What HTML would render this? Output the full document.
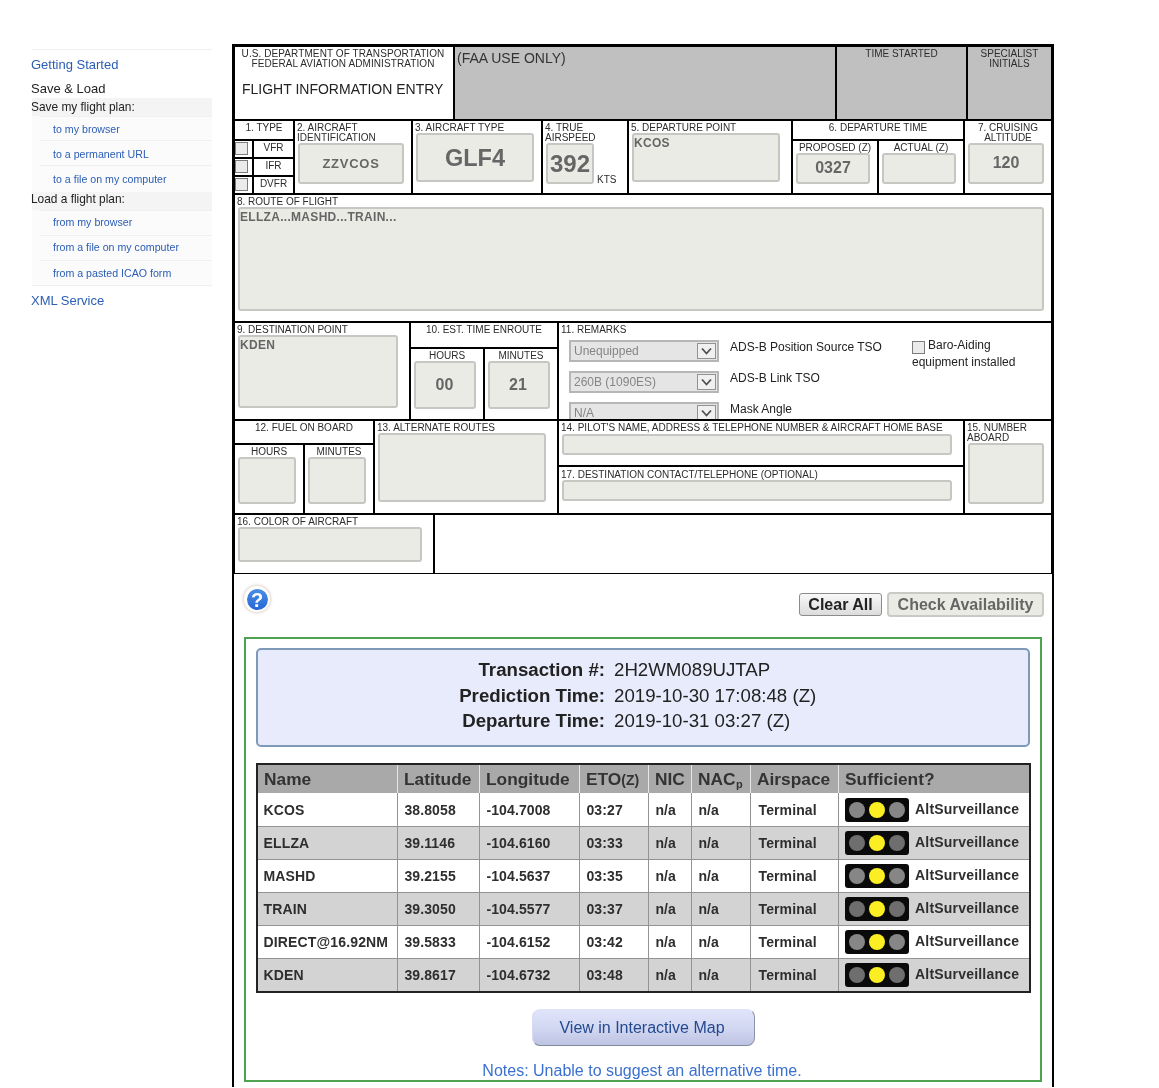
<!DOCTYPE html>
<html lang="en">
<head>
<meta charset="utf-8">
<title>Flight Information Entry</title>
<style>
html,body{margin:0;padding:0;background:#fff;}
#wrap{position:absolute;left:0;top:0;width:1159px;height:1088px;will-change:transform;}
body{width:1159px;height:1088px;position:relative;overflow:hidden;font-family:"Liberation Sans",Arial,sans-serif;color:#222;}
.abs,.l,.t,.ib,.lb,.sb a,.sb div{position:absolute;}
.l{background:#000;}
.lb{font-size:10px;line-height:10px;color:#2c2c2c;white-space:nowrap;}
.c{text-align:center;}
.lb:not(.c){margin-left:-1px;}
.ib{box-sizing:border-box;background:#ebebe6;border:2px solid #c6c6c2;border-radius:3px;color:#666;font-weight:bold;text-align:center;white-space:nowrap;}
.ta{text-align:left;font-size:12px;letter-spacing:.3px;line-height:14px;padding:1px 0 0 0;}
.gray{background:#c0c0c0;}
.cb{position:absolute;box-sizing:border-box;width:13px;height:13px;border:1px solid #7c7c7c;background:#ebebeb;}
.sel{position:absolute;box-sizing:border-box;width:150px;height:22px;border:2px solid #b6b6b6;background:#e5e5e5;color:#858585;font-size:12px;line-height:18px;padding-left:3px;}
.sel i{position:absolute;right:1px;top:1px;box-sizing:border-box;width:19px;height:16px;border:1px solid #929292;background:#f0f0f0;}
.sel i svg{position:absolute;left:3px;top:3px;}
.r12{position:absolute;font-size:12px;line-height:14px;color:#222;white-space:nowrap;}

.s1{font-size:13px;margin-left:-1px;line-height:16px;white-space:nowrap;}
.s2{font-size:11.9px;margin-left:-1px;line-height:14px;white-space:nowrap;color:#222;}
.s3{font-size:10.65px;line-height:14px;white-space:nowrap;color:#2b5db5;}
.help{position:absolute;left:244px;top:586px;width:26px;height:26px;border-radius:50%;background:#fff;box-shadow:0 0 3px 1px #ddd3c8;}
.help b{position:absolute;left:2.5px;top:2.5px;width:21px;height:21px;border-radius:50%;background:linear-gradient(#4a8fe4,#2566d6);color:#fff;font-size:20px;line-height:22px;text-align:center;font-weight:bold;}
.btn1{position:absolute;box-sizing:border-box;left:799px;top:593px;width:83px;height:23px;border:1px solid #8c8c8c;border-radius:3px;background:linear-gradient(#f8f8f8,#dcdcdc);font-size:16px;font-weight:bold;line-height:21px;text-align:center;color:#222;}
.btn2{position:absolute;box-sizing:border-box;left:887px;top:592px;width:157px;height:25px;border:2px solid #c9c9c5;border-radius:4px;background:#ebebe6;font-size:16px;font-weight:bold;line-height:21px;text-align:center;color:#666;}
.green{position:absolute;box-sizing:border-box;left:244px;top:637px;width:798px;height:445px;border:2px solid #4fa24f;}
.blue{position:absolute;box-sizing:border-box;left:256px;top:648px;width:774px;height:99px;border:2px solid #7f99b8;border-radius:5px;background:#e8ebfb;}
.blue div{position:absolute;font-size:18.67px;line-height:22px;white-space:nowrap;color:#222;}
.blue .k{right:423px;font-weight:bold;text-align:right;}
.blue .v{left:356px;}
.tbl{position:absolute;left:256px;top:763px;width:775px;height:230px;background:#222;}
.tbl div{position:absolute;}
.th{top:2px;height:28px;background:#a9a9a9;}
.th span{position:absolute;left:6px;top:3px;font-size:17.33px;line-height:22px;font-weight:bold;color:#333;white-space:nowrap;}
.td{height:33px;}
.sep{left:2px;width:771px;height:1px;background:#939393;}
.th sub{font-size:11px;vertical-align:baseline;position:relative;top:3px;left:.5px;}
.th small{font-size:14px;}
.thbg{left:2px;top:2px;width:771px;height:28px;background:#e6e6e6;}
.tbbg{left:2px;top:30px;width:771px;height:198px;background:#939393;}
.td .nm{left:5.5px;letter-spacing:.15px;}
.td .as{left:76px;top:8.4px;font-size:14px;letter-spacing:.2px;}
.td span{position:absolute;left:6.4px;top:9px;font-size:14px;letter-spacing:.12px;line-height:16px;font-weight:bold;color:#2e2e2e;white-space:nowrap;}
.tl{position:absolute;left:6px;top:5px;width:64px;height:24px;border-radius:3px;background:#0a0a0a;}
.tl i{position:absolute;top:4px;width:16px;height:16px;border-radius:50%;}
.vbtn{position:absolute;box-sizing:border-box;left:532px;top:1009px;width:223px;height:37px;border-radius:8px;border:1px solid;border-color:#dfe3f8 #8d92a8 #7f8a9c #d8dcf3;background:linear-gradient(#e0e4fa,#d3d8f2 50%,#bdc3e2);color:#23498f;font-size:16px;line-height:35px;text-align:center;text-indent:-3px;}
.notes{position:absolute;left:243px;top:1062px;width:798px;text-align:center;font-size:16px;line-height:18px;color:#3a70d0;}
</style>
</head>
<body><div id="wrap">

<!-- SIDEBAR -->
<div class="sb" id="sb">
<div style="left:32px;top:49px;width:180px;height:1px;background:#f0f0f0"></div>
<a class="s1" style="left:32px;top:57px;color:#2b5db5">Getting Started</a>
<div class="s1" style="left:32px;top:81px;color:#222">Save &amp; Load</div>
<div style="left:32px;top:98px;width:180px;height:18px;background:#f4f4f4"></div>
<div class="s2" style="left:32px;top:100px">Save my flight plan:</div>
<div style="left:32px;top:116px;width:180px;height:76px;background:#fbfbfb"></div>
<div style="left:40px;top:116px;width:172px;height:1px;background:#f0f0f0"></div>
<div style="left:40px;top:140px;width:172px;height:1px;background:#f0f0f0"></div>
<div style="left:40px;top:165px;width:172px;height:1px;background:#f0f0f0"></div>
<a class="s3" style="left:53px;top:122px">to my browser</a>
<a class="s3" style="left:53px;top:147px">to a permanent URL</a>
<a class="s3" style="left:53px;top:172px">to a file on my computer</a>
<div style="left:32px;top:192px;width:180px;height:18px;background:#f4f4f4"></div>
<div class="s2" style="left:32px;top:192px">Load a flight plan:</div>
<div style="left:32px;top:210px;width:180px;height:75px;background:#fbfbfb"></div>
<div style="left:40px;top:210px;width:172px;height:1px;background:#f0f0f0"></div>
<div style="left:40px;top:235px;width:172px;height:1px;background:#f0f0f0"></div>
<div style="left:40px;top:260px;width:172px;height:1px;background:#f0f0f0"></div>
<div style="left:32px;top:285px;width:180px;height:1px;background:#f0f0f0"></div>
<a class="s3" style="left:53px;top:215px">from my browser</a>
<a class="s3" style="left:53px;top:240px">from a file on my computer</a>
<a class="s3" style="left:53px;top:266px">from a pasted ICAO form</a>
<a class="s1" style="left:32px;top:293px;color:#2b5db5">XML Service</a>
</div>

<!-- FORM GRID LINES -->
<div id="grid">
<div class="l" style="left:232px;top:44px;width:2px;height:1043px"></div>
<div class="l" style="left:1052px;top:44px;width:2px;height:1043px"></div>
<div class="l" style="left:232px;top:44px;width:822px;height:3px"></div>
<div class="l" style="left:234px;top:46px;width:1px;height:528px"></div>
<div class="l" style="left:1051px;top:46px;width:1px;height:528px"></div>
<div class="l" style="left:235px;top:119px;width:816px;height:2px"></div>
<div class="l" style="left:235px;top:193px;width:816px;height:2px"></div>
<div class="l" style="left:235px;top:321px;width:816px;height:2px"></div>
<div class="l" style="left:235px;top:419px;width:816px;height:2px"></div>
<div class="l" style="left:235px;top:513px;width:816px;height:2px"></div>
<div class="l" style="left:235px;top:573px;width:816px;height:1px"></div>
<!-- row1 -->
<div class="gray abs" style="left:455px;top:47px;width:596px;height:72px"></div>
<div class="l" style="left:453px;top:47px;width:2px;height:72px"></div>
<div class="l" style="left:835px;top:47px;width:2px;height:72px"></div>
<div class="l" style="left:966px;top:47px;width:2px;height:72px"></div>
<!-- row2 -->
<div class="l" style="left:293px;top:121px;width:2px;height:72px"></div>
<div class="l" style="left:411px;top:121px;width:2px;height:72px"></div>
<div class="l" style="left:541px;top:121px;width:2px;height:72px"></div>
<div class="l" style="left:627px;top:121px;width:2px;height:72px"></div>
<div class="l" style="left:791px;top:121px;width:2px;height:72px"></div>
<div class="l" style="left:963px;top:121px;width:2px;height:72px"></div>
<div class="l" style="left:235px;top:139px;width:58px;height:2px"></div>
<div class="l" style="left:235px;top:157px;width:58px;height:2px"></div>
<div class="l" style="left:235px;top:175px;width:58px;height:2px"></div>
<div class="l" style="left:252px;top:141px;width:2px;height:52px"></div>
<div class="l" style="left:793px;top:139px;width:170px;height:2px"></div>
<div class="l" style="left:877px;top:141px;width:2px;height:52px"></div>
<!-- row4 -->
<div class="l" style="left:409px;top:323px;width:2px;height:96px"></div>
<div class="l" style="left:557px;top:323px;width:2px;height:96px"></div>
<div class="l" style="left:411px;top:347px;width:146px;height:2px"></div>
<div class="l" style="left:483px;top:349px;width:2px;height:70px"></div>
<!-- row5 -->
<div class="l" style="left:373px;top:421px;width:2px;height:92px"></div>
<div class="l" style="left:557px;top:421px;width:2px;height:92px"></div>
<div class="l" style="left:963px;top:421px;width:2px;height:92px"></div>
<div class="l" style="left:235px;top:443px;width:138px;height:2px"></div>
<div class="l" style="left:303px;top:445px;width:2px;height:68px"></div>
<div class="l" style="left:559px;top:465px;width:404px;height:2px"></div>
<!-- row6 -->
<div class="l" style="left:433px;top:515px;width:2px;height:58px"></div>
</div>

<!-- ROW 1 -->
<div class="lb c" style="left:234px;top:49px;width:218px;letter-spacing:.09px">U.S. DEPARTMENT OF TRANSPORTATION<br>FEDERAL AVIATION ADMINISTRATION</div>
<div class="abs" style="left:242px;top:81px;font-size:14px;line-height:16px;white-space:nowrap;color:#222">FLIGHT INFORMATION ENTRY</div>
<div class="abs" style="left:457px;top:50px;font-size:14px;line-height:16px;white-space:nowrap;color:#333">(FAA USE ONLY)</div>
<div class="lb c" style="left:837px;top:49px;width:129px">TIME STARTED</div>
<div class="lb c" style="left:968px;top:49px;width:83px">SPECIALIST<br>INITIALS</div>

<!-- ROW 2 -->
<div class="lb c" style="left:235px;top:123px;width:58px">1. TYPE</div>
<div class="cb" style="left:235px;top:142px"></div>
<div class="cb" style="left:235px;top:160px"></div>
<div class="cb" style="left:235px;top:178px"></div>
<div class="lb c" style="left:254px;top:143px;width:39px">VFR</div>
<div class="lb c" style="left:254px;top:161px;width:39px">IFR</div>
<div class="lb c" style="left:254px;top:179px;width:39px">DVFR</div>

<div class="lb" style="left:298px;top:123px">2. AIRCRAFT<br>IDENTIFICATION</div>
<div class="ib" style="left:298px;top:143px;width:106px;height:41px;font-size:13px;letter-spacing:.75px;line-height:38px">ZZVCOS</div>

<div class="lb" style="left:416px;top:123px">3. AIRCRAFT TYPE</div>
<div class="ib" style="left:416px;top:133px;width:118px;height:49px;font-size:23.5px;line-height:46px">GLF4</div>

<div class="lb" style="left:546px;top:123px">4. TRUE<br>AIRSPEED</div>
<div class="ib" style="left:546px;top:143px;width:48px;height:41px;font-size:24px;line-height:38px">392</div>
<div class="lb" style="left:598px;top:175px">KTS</div>

<div class="lb" style="left:632px;top:123px">5. DEPARTURE POINT</div>
<div class="ib ta" style="left:632px;top:133px;width:148px;height:49px">KCOS</div>

<div class="lb c" style="left:793px;top:123px;width:170px">6. DEPARTURE TIME</div>
<div class="lb c" style="left:793px;top:143px;width:84px">PROPOSED (Z)</div>
<div class="lb c" style="left:879px;top:143px;width:84px">ACTUAL (Z)</div>
<div class="ib" style="left:796px;top:153px;width:74px;height:31px;font-size:16px;line-height:25px">0327</div>
<div class="ib" style="left:882px;top:153px;width:74px;height:31px"></div>

<div class="lb c" style="left:965px;top:123px;width:86px">7. CRUISING<br>ALTITUDE</div>
<div class="ib" style="left:968px;top:143px;width:76px;height:41px;font-size:16px;line-height:36px">120</div>

<!-- ROW 3 -->
<div class="lb" style="left:238px;top:197px">8. ROUTE OF FLIGHT</div>
<div class="ib ta" style="left:238px;top:207px;width:806px;height:104px">ELLZA...MASHD...TRAIN...</div>

<!-- ROW 4 -->
<div class="lb" style="left:238px;top:325px">9. DESTINATION POINT</div>
<div class="ib ta" style="left:238px;top:335px;width:160px;height:73px">KDEN</div>

<div class="lb c" style="left:411px;top:325px;width:146px">10. EST. TIME ENROUTE</div>
<div class="lb c" style="left:411px;top:351px;width:72px">HOURS</div>
<div class="lb c" style="left:485px;top:351px;width:72px">MINUTES</div>
<div class="ib" style="left:414px;top:361px;width:62px;height:48px;font-size:16px;line-height:43px;text-indent:-1px">00</div>
<div class="ib" style="left:488px;top:361px;width:62px;height:48px;font-size:16px;line-height:43px;text-indent:-2px">21</div>

<div class="lb" style="left:562px;top:325px">11. REMARKS</div>
<div class="sel" style="left:569px;top:340px">Unequipped<i><svg width="11" height="8" viewBox="0 0 11 8"><path d="M1 1.5 L5.5 6.5 L10 1.5" fill="none" stroke="#505050" stroke-width="1.8"/></svg></i></div>
<div class="sel" style="left:569px;top:371px">260B (1090ES)<i><svg width="11" height="8" viewBox="0 0 11 8"><path d="M1 1.5 L5.5 6.5 L10 1.5" fill="none" stroke="#505050" stroke-width="1.8"/></svg></i></div>
<div class="sel" style="left:569px;top:402px;height:17px;border-bottom:0;overflow:hidden">N/A<i><svg width="11" height="8" viewBox="0 0 11 8"><path d="M1 1.5 L5.5 6.5 L10 1.5" fill="none" stroke="#505050" stroke-width="1.8"/></svg></i></div>
<div class="r12" style="left:730px;top:340px">ADS-B Position Source TSO</div>
<div class="r12" style="left:730px;top:371px">ADS-B Link TSO</div>
<div class="r12" style="left:730px;top:402px">Mask Angle</div>
<div class="cb" style="left:912px;top:341px"></div>
<div class="r12" style="left:928px;top:338px">Baro-Aiding</div>
<div class="r12" style="left:912px;top:355px">equipment installed</div>

<!-- ROW 5 -->
<div class="lb c" style="left:235px;top:423px;width:138px">12. FUEL ON BOARD</div>
<div class="lb c" style="left:235px;top:447px;width:68px">HOURS</div>
<div class="lb c" style="left:305px;top:447px;width:68px">MINUTES</div>
<div class="ib" style="left:238px;top:457px;width:58px;height:47px"></div>
<div class="ib" style="left:308px;top:457px;width:58px;height:47px"></div>

<div class="lb" style="left:378px;top:423px">13. ALTERNATE ROUTES</div>
<div class="ib" style="left:378px;top:433px;width:168px;height:69px"></div>

<div class="lb" style="left:562px;top:423px">14. PILOT'S NAME, ADDRESS &amp; TELEPHONE NUMBER &amp; AIRCRAFT HOME BASE</div>
<div class="ib" style="left:562px;top:434px;width:390px;height:21px"></div>
<div class="lb" style="left:562px;top:470px">17. DESTINATION CONTACT/TELEPHONE (OPTIONAL)</div>
<div class="ib" style="left:562px;top:480px;width:390px;height:21px"></div>

<div class="lb" style="left:968px;top:423px">15. NUMBER<br>ABOARD</div>
<div class="ib" style="left:968px;top:443px;width:76px;height:61px"></div>

<!-- ROW 6 -->
<div class="lb" style="left:238px;top:517px">16. COLOR OF AIRCRAFT</div>
<div class="ib" style="left:238px;top:527px;width:184px;height:35px"></div>

<!-- BELOW FORM -->
<div id="below">
<div class="help"><b>?</b></div>
<div class="btn1">Clear All</div>
<div class="btn2">Check Availability</div>
<div class="green"></div>
<div class="blue">
<div class="k" style="top:9px">Transaction #:</div><div class="v" style="top:9px">2H2WM089UJTAP</div>
<div class="k" style="top:35px">Prediction Time:</div><div class="v" style="top:35px">2019-10-30 17:08:48 (Z)</div>
<div class="k" style="top:60px">Departure Time:</div><div class="v" style="top:60px">2019-10-31 03:27 (Z)</div>
</div>
<div class="tbl">
<div class="thbg"></div>
<div class="tbbg"></div>
<div class="th" style="left:2px;width:139px"><span>Name</span></div>
<div class="th" style="left:142px;width:81px"><span>Latitude</span></div>
<div class="th" style="left:224px;width:99px"><span>Longitude</span></div>
<div class="th" style="left:324px;width:68px"><span>ETO<small>(Z)</small></span></div>
<div class="th" style="left:393px;width:42px"><span>NIC</span></div>
<div class="th" style="left:436px;width:58px"><span>NAC<sub>p</sub></span></div>
<div class="th" style="left:495px;width:87px"><span>Airspace</span></div>
<div class="th" style="left:583px;width:190px"><span>Sufficient?</span></div>
<div class="td" style="left:2px;top:30px;width:139px;height:33px;background:#fff"><span class="nm">KCOS</span></div>
<div class="td" style="left:142px;top:30px;width:81px;height:33px;background:#fff"><span>38.8058</span></div>
<div class="td" style="left:224px;top:30px;width:99px;height:33px;background:#fff"><span>-104.7008</span></div>
<div class="td" style="left:324px;top:30px;width:68px;height:33px;background:#fff"><span>03:27</span></div>
<div class="td" style="left:393px;top:30px;width:42px;height:33px;background:#fff"><span>n/a</span></div>
<div class="td" style="left:436px;top:30px;width:58px;height:33px;background:#fff"><span>n/a</span></div>
<div class="td" style="left:495px;top:30px;width:87px;height:33px;background:#fff"><span style="left:7.5px">Terminal</span></div>
<div class="td" style="left:583px;top:30px;width:190px;height:33px;background:#fff"><div class="tl"><i style="left:4px;background:#868686"></i><i style="left:24px;background:#fbee22"></i><i style="left:44px;background:#868686"></i></div><span class="as">AltSurveillance</span></div>
<div class="td" style="left:2px;top:63px;width:139px;height:33px;background:#d3d3d3"><span class="nm">ELLZA</span></div>
<div class="td" style="left:142px;top:63px;width:81px;height:33px;background:#d3d3d3"><span>39.1146</span></div>
<div class="td" style="left:224px;top:63px;width:99px;height:33px;background:#d3d3d3"><span>-104.6160</span></div>
<div class="td" style="left:324px;top:63px;width:68px;height:33px;background:#d3d3d3"><span>03:33</span></div>
<div class="td" style="left:393px;top:63px;width:42px;height:33px;background:#d3d3d3"><span>n/a</span></div>
<div class="td" style="left:436px;top:63px;width:58px;height:33px;background:#d3d3d3"><span>n/a</span></div>
<div class="td" style="left:495px;top:63px;width:87px;height:33px;background:#d3d3d3"><span style="left:7.5px">Terminal</span></div>
<div class="td" style="left:583px;top:63px;width:190px;height:33px;background:#d3d3d3"><div class="tl"><i style="left:4px;background:#6e6e6e"></i><i style="left:24px;background:#fbee22"></i><i style="left:44px;background:#6e6e6e"></i></div><span class="as">AltSurveillance</span></div>
<div class="td" style="left:2px;top:96px;width:139px;height:33px;background:#fff"><span class="nm">MASHD</span></div>
<div class="td" style="left:142px;top:96px;width:81px;height:33px;background:#fff"><span>39.2155</span></div>
<div class="td" style="left:224px;top:96px;width:99px;height:33px;background:#fff"><span>-104.5637</span></div>
<div class="td" style="left:324px;top:96px;width:68px;height:33px;background:#fff"><span>03:35</span></div>
<div class="td" style="left:393px;top:96px;width:42px;height:33px;background:#fff"><span>n/a</span></div>
<div class="td" style="left:436px;top:96px;width:58px;height:33px;background:#fff"><span>n/a</span></div>
<div class="td" style="left:495px;top:96px;width:87px;height:33px;background:#fff"><span style="left:7.5px">Terminal</span></div>
<div class="td" style="left:583px;top:96px;width:190px;height:33px;background:#fff"><div class="tl"><i style="left:4px;background:#868686"></i><i style="left:24px;background:#fbee22"></i><i style="left:44px;background:#868686"></i></div><span class="as">AltSurveillance</span></div>
<div class="td" style="left:2px;top:129px;width:139px;height:33px;background:#d3d3d3"><span class="nm">TRAIN</span></div>
<div class="td" style="left:142px;top:129px;width:81px;height:33px;background:#d3d3d3"><span>39.3050</span></div>
<div class="td" style="left:224px;top:129px;width:99px;height:33px;background:#d3d3d3"><span>-104.5577</span></div>
<div class="td" style="left:324px;top:129px;width:68px;height:33px;background:#d3d3d3"><span>03:37</span></div>
<div class="td" style="left:393px;top:129px;width:42px;height:33px;background:#d3d3d3"><span>n/a</span></div>
<div class="td" style="left:436px;top:129px;width:58px;height:33px;background:#d3d3d3"><span>n/a</span></div>
<div class="td" style="left:495px;top:129px;width:87px;height:33px;background:#d3d3d3"><span style="left:7.5px">Terminal</span></div>
<div class="td" style="left:583px;top:129px;width:190px;height:33px;background:#d3d3d3"><div class="tl"><i style="left:4px;background:#6e6e6e"></i><i style="left:24px;background:#fbee22"></i><i style="left:44px;background:#6e6e6e"></i></div><span class="as">AltSurveillance</span></div>
<div class="td" style="left:2px;top:162px;width:139px;height:33px;background:#fff"><span class="nm">DIRECT@16.92NM</span></div>
<div class="td" style="left:142px;top:162px;width:81px;height:33px;background:#fff"><span>39.5833</span></div>
<div class="td" style="left:224px;top:162px;width:99px;height:33px;background:#fff"><span>-104.6152</span></div>
<div class="td" style="left:324px;top:162px;width:68px;height:33px;background:#fff"><span>03:42</span></div>
<div class="td" style="left:393px;top:162px;width:42px;height:33px;background:#fff"><span>n/a</span></div>
<div class="td" style="left:436px;top:162px;width:58px;height:33px;background:#fff"><span>n/a</span></div>
<div class="td" style="left:495px;top:162px;width:87px;height:33px;background:#fff"><span style="left:7.5px">Terminal</span></div>
<div class="td" style="left:583px;top:162px;width:190px;height:33px;background:#fff"><div class="tl"><i style="left:4px;background:#868686"></i><i style="left:24px;background:#fbee22"></i><i style="left:44px;background:#868686"></i></div><span class="as">AltSurveillance</span></div>
<div class="td" style="left:2px;top:195px;width:139px;height:33px;background:#d3d3d3"><span class="nm">KDEN</span></div>
<div class="td" style="left:142px;top:195px;width:81px;height:33px;background:#d3d3d3"><span>39.8617</span></div>
<div class="td" style="left:224px;top:195px;width:99px;height:33px;background:#d3d3d3"><span>-104.6732</span></div>
<div class="td" style="left:324px;top:195px;width:68px;height:33px;background:#d3d3d3"><span>03:48</span></div>
<div class="td" style="left:393px;top:195px;width:42px;height:33px;background:#d3d3d3"><span>n/a</span></div>
<div class="td" style="left:436px;top:195px;width:58px;height:33px;background:#d3d3d3"><span>n/a</span></div>
<div class="td" style="left:495px;top:195px;width:87px;height:33px;background:#d3d3d3"><span style="left:7.5px">Terminal</span></div>
<div class="td" style="left:583px;top:195px;width:190px;height:33px;background:#d3d3d3"><div class="tl"><i style="left:4px;background:#6e6e6e"></i><i style="left:24px;background:#fbee22"></i><i style="left:44px;background:#6e6e6e"></i></div><span class="as">AltSurveillance</span></div>
<div class="sep" style="top:63px"></div><div class="sep" style="top:96px"></div><div class="sep" style="top:129px"></div><div class="sep" style="top:162px"></div><div class="sep" style="top:195px"></div>
</div>
<div class="vbtn">View in Interactive Map</div>
<div class="notes">Notes: Unable to suggest an alternative time.</div>
</div>

</div></body>
</html>
